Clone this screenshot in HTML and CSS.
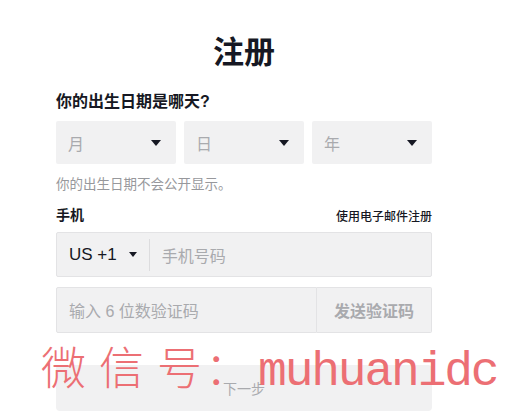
FILE: index.html
```html
<!DOCTYPE html>
<html lang="zh-CN">
<head>
    <meta charset="UTF-8">
    <meta name="viewport" content="width=device-width, initial-scale=1.0">
    <title>注册</title>
    <link rel="stylesheet" href="styles.css">
</head>
<body>
    <div class="signupForm">
        <h1 class="formTitle">注册</h1>

        <div class="fieldLabel">你的出生日期是哪天?</div>
        <div class="birthdayRow">
            <div class="selectBox"><span>月</span><i class="caret"></i></div>
            <div class="selectBox"><span>日</span><i class="caret"></i></div>
            <div class="selectBox"><span>年</span><i class="caret"></i></div>
        </div>
        <div class="helperText">你的出生日期不会公开显示。</div>

        <div class="labelRow">
            <span class="fieldLabel small">手机</span>
            <a class="switchLink" href="#">使用电子邮件注册</a>
        </div>
        <div class="phoneBox">
            <div class="areaCode">US +1 <i class="caret small"></i></div>
            <span class="divider"></span>
            <span class="placeholder">手机号码</span>
        </div>
        <div class="codeRow">
            <div class="codeInput"><span class="placeholder">输入 6 位数验证码</span></div>
            <button class="sendButton">发送验证码</button>
        </div>

        <button class="nextButton">下一步</button>
    </div>

    <!-- 截图上的水印 -->
    <div class="watermark"><span class="wmCjk">微信号</span><span class="wmColon">：</span><span class="wmLatin">muhuanidc</span></div>
</body>
</html>
```

FILE: styles.css
```css
body {
    margin: 0;
    padding-top: 35px;
    font-family: "Liberation Sans", "Noto Sans CJK SC", sans-serif;
    color: #161823;
    background: #fff;
    overflow: hidden;
}
.signupForm {
    width: 376px;
    margin-left: 56px;
    display: flex;
    flex-direction: column;
}
.formTitle {
    margin: 0;
    font-size: 31px;
    line-height: 36px;
    font-weight: 700;
    text-align: center;
}
.fieldLabel {
    margin-top: 20px;
    font-size: 16px;
    line-height: 22px;
    font-weight: 700;
}
.fieldLabel.small {
    margin-top: 0;
    font-size: 14px;
    line-height: 20px;
}
.birthdayRow {
    display: flex;
    gap: 8px;
    margin-top: 8px;
}
.selectBox {
    flex: 1;
    height: 43px;
    box-sizing: border-box;
    padding: 0 15px 0 12px;
    display: flex;
    align-items: center;
    justify-content: space-between;
    background: #f1f1f2;
    border-radius: 2px;
    font-size: 16px;
    color: #a9aaae;
}
.caret {
    width: 0;
    height: 0;
    border-left: 5px solid transparent;
    border-right: 5px solid transparent;
    border-top: 6px solid #161823;
}
.caret.small {
    border-left-width: 4.5px;
    border-right-width: 4.5px;
    border-top-width: 5px;
    margin-left: 12px;
}
.helperText {
    margin-top: 12px;
    font-size: 13.5px;
    line-height: 18px;
    color: #97989c;
}
.labelRow {
    margin-top: 11px;
    display: flex;
    justify-content: space-between;
    align-items: center;
}
.switchLink {
    font-size: 12px;
    color: #161823;
    text-decoration: none;
    font-weight: 500;
}
.phoneBox {
    margin-top: 7px;
    height: 45px;
    box-sizing: border-box;
    display: flex;
    align-items: center;
    background: #f1f1f2;
    border: 1px solid #e3e3e5;
    border-radius: 2px;
    padding-left: 12px;
}
.areaCode {
    display: flex;
    align-items: center;
    font-size: 17px;
}
.divider {
    width: 1px;
    height: 32px;
    background: #dcdcde;
    margin: 0 12px 0 12px;
}
.placeholder {
    font-size: 16px;
    color: #a9aaae;
}
.codeRow {
    margin-top: 10px;
    display: flex;
    height: 46px;
}
.codeInput {
    flex: 1;
    box-sizing: border-box;
    display: flex;
    align-items: center;
    padding-left: 12px;
    background: #f1f1f2;
    border: 1px solid #e3e3e5;
    border-radius: 2px 0 0 2px;
}
.sendButton {
    width: 115px;
    box-sizing: border-box;
    background: #f1f1f2;
    border: 1px solid #e3e3e5;
    border-left: 0;
    border-radius: 0 2px 2px 0;
    font-family: inherit;
    font-size: 16px;
    font-weight: 600;
    color: #a9aaae;
}
.nextButton {
    margin-top: 32px;
    height: 46px;
    border: 0;
    border-radius: 4px;
    background: #f1f1f2;
    font-family: inherit;
    font-size: 14px;
    color: #a9aaae;
}
.watermark {
    position: absolute;
    left: 41px;
    top: 336px;
    color: #ec6f74;
    white-space: nowrap;
    line-height: 60px;
    font-family: "Noto Sans CJK SC", sans-serif;
    font-weight: 300;
    font-size: 45px;
}
.wmCjk {
    letter-spacing: 13px;
}
.wmColon {
    margin-left: -10px;
}
.wmLatin {
    margin-left: 8px;
    font-family: "Liberation Mono", monospace;
    font-weight: 400;
    font-size: 48px;
    letter-spacing: -2.2px;
}
```
